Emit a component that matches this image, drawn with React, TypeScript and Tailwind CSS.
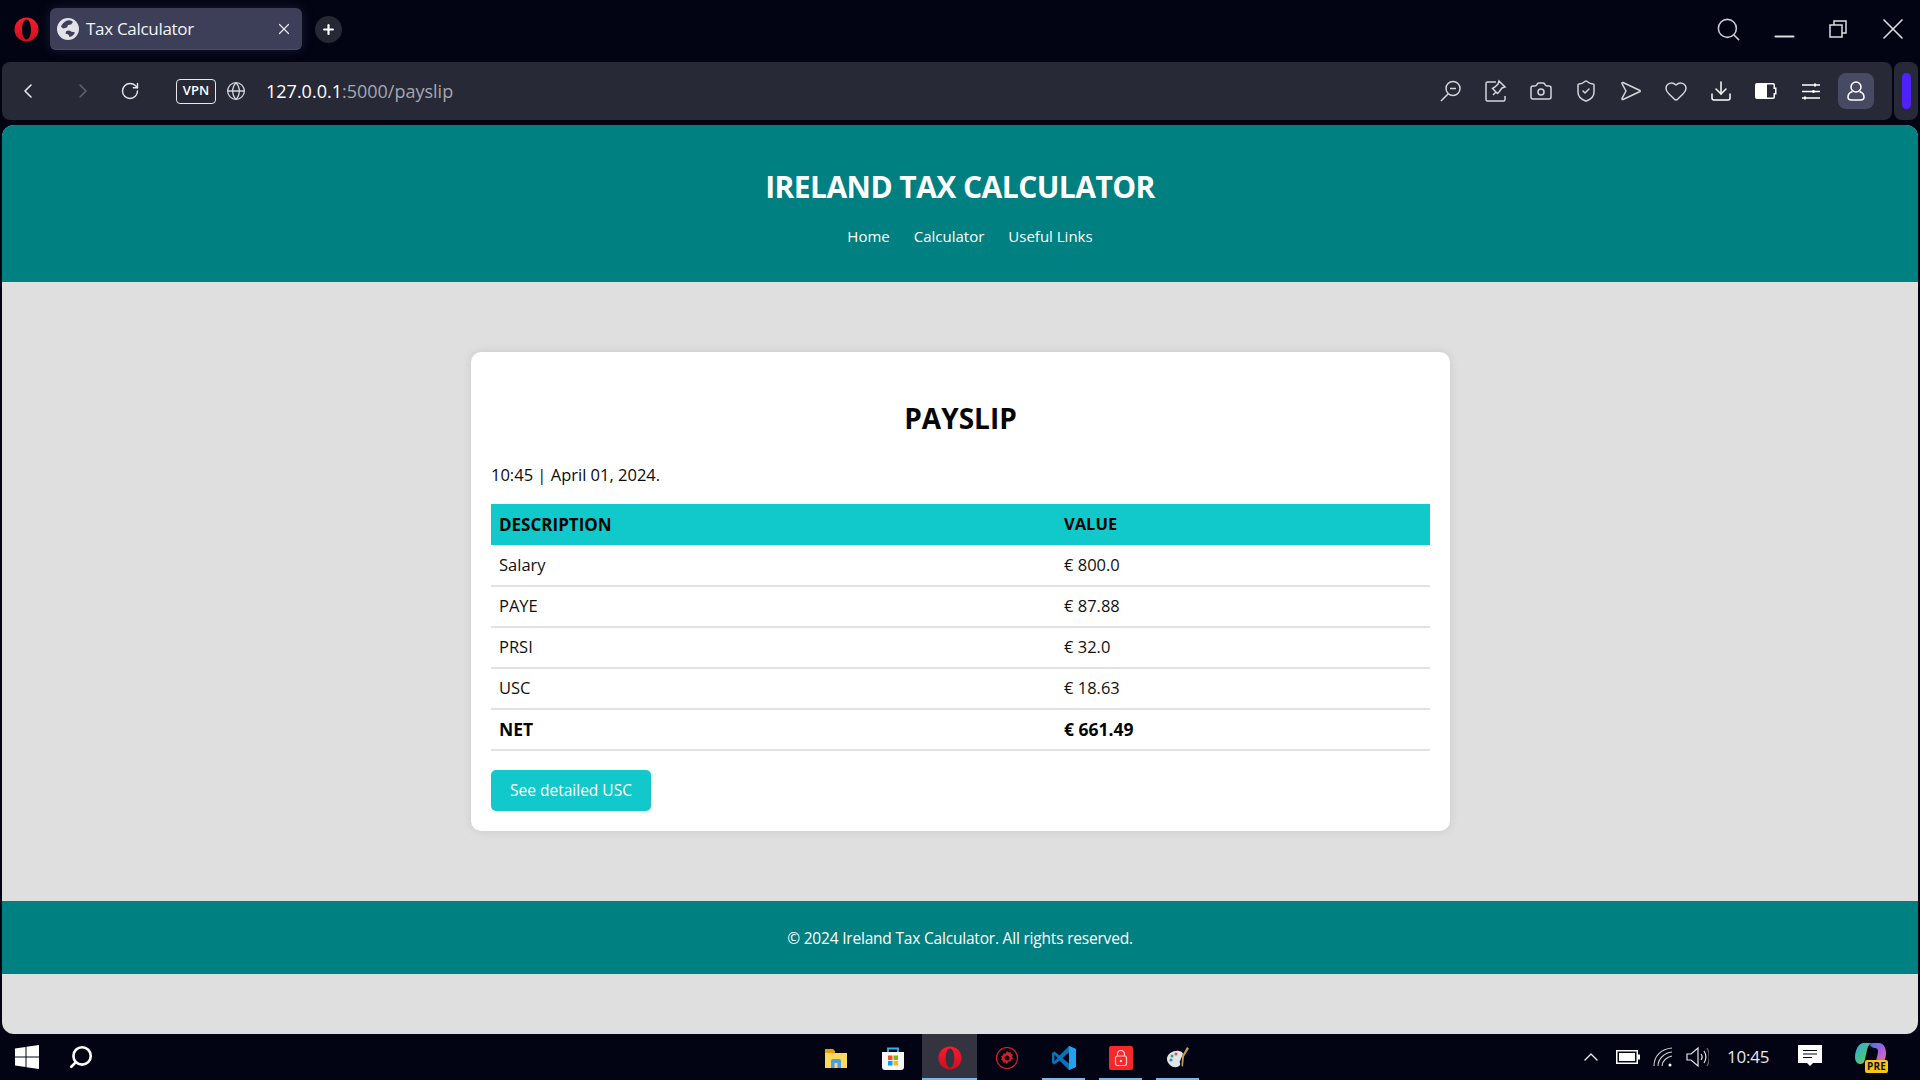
import { ReactNode } from "react"
import { ChevronLeft, ChevronRight, RotateCw, Globe, Search, Minus, X, Plus, Heart, Camera, ShieldCheck, Download, ChevronUp } from "lucide-react"

const rows = [
  { label: "Salary", value: "€ 800.0" },
  { label: "PAYE", value: "€ 87.88" },
  { label: "PRSI", value: "€ 32.0" },
  { label: "USC", value: "€ 18.63" },
]

function OperaLogo({ size, id }: { size: number; id: string }) {
  return (
    <svg width={size} height={size} viewBox="0 0 24 24">
      <defs>
        <linearGradient id={id} x1="0" y1="0" x2="0" y2="1">
          <stop offset="0" stopColor="#ff1b2d" />
          <stop offset="1" stopColor="#c9101f" />
        </linearGradient>
      </defs>
      <path
        fillRule="evenodd"
        fill={`url(#${id})`}
        d="M12 .5C5.6.5.5 5.6.5 12s5.100 11.500 11.500 11.500S23.500 18.400 23.500 12 18.400.5 12 .5Zm0 2c2.600 0 4.300 4.200 4.300 9.500s-1.700 9.500-4.300 9.500S7.700 17.300 7.700 12 9.400 2.500 12 2.500Z"
      />
    </svg>
  )
}

function TabGlobe() {
  return (
    <svg width="22" height="22" viewBox="0 0 22 22" className="shrink-0">
      <circle cx="11" cy="11" r="11" fill="#e2e3e6" />
      <path fill="#3c3f57" d="M9 3c2-1 5-1 7 1l-2 2.500-3 .5-1 2.500-4 1L4 8.500C5 6 7 4 9 3Z" />
      <path fill="#3c3f57" d="M9 13.500c2-1.500 4-1 5 0l4 1c-1 2.500-3 4-5.500 4.500l-1-2.500-3-1z" />
    </svg>
  )
}

function ToolIcon({ children }: { children: ReactNode }) {
  return <div className="w-[45px] h-[36px] flex items-center justify-center text-[#d3d5da] shrink-0">{children}</div>
}

function Toolbar() {
  return (
    <div className="flex items-center">
      <ToolIcon>
        <svg width="24" height="24" viewBox="0 0 24 24" fill="none" stroke="currentColor" strokeWidth="1.5">
          <circle cx="14" cy="9.500" r="7" />
          <path d="M11 9.500h6M9 15l-7 7" />
        </svg>
      </ToolIcon>
      <ToolIcon>
        <svg width="24" height="24" viewBox="0 0 24 24" fill="none" stroke="currentColor" strokeWidth="1.500">
          <path d="M12 3H3.500A1.500 1.500 0 0 0 2 4.500v16A1.500 1.500 0 0 0 3.500 22h16a1.500 1.500 0 0 0 1.500-1.500V17" />
          <path d="m15 2 6 6-3 1-3 4-1.500 1.500-5-5L11 8l3-3 1-3ZM9 16l3-3" />
        </svg>
      </ToolIcon>
      <ToolIcon><Camera size={24} strokeWidth={1.5} /></ToolIcon>
      <ToolIcon><ShieldCheck size={24} strokeWidth={1.5} /></ToolIcon>
      <ToolIcon>
        <svg width="24" height="24" viewBox="0 0 24 24" fill="none" stroke="currentColor" strokeWidth="1.500" strokeLinejoin="round">
          <path d="M4 3.500 21 11.500a.6.6 0 0 1 0 1L4 20.500c-.8.300-1.400-.4-1-1.100L7 12 3 4.600c-.4-.7.200-1.400 1-1.100Z" />
        </svg>
      </ToolIcon>
      <ToolIcon><Heart size={24} strokeWidth={1.5} /></ToolIcon>
      <ToolIcon><Download size={24} strokeWidth={1.5} className="text-white" /></ToolIcon>
      <ToolIcon>
        <svg width="24" height="24" viewBox="0 0 24 24">
          <path fill="#fff" d="M3 4h10v16H3a2 2 0 0 1-2-2V6a2 2 0 0 1 2-2Z" />
          <path fill="#fff" d="M13 4h6a2 2 0 0 1 2 2v2.500h1.500V15.500H21V18a2 2 0 0 1-2 2h-6v-1.500h6a.5.500 0 0 0 .5-.5v-4h1.500v-4h-1.500V6a.5.500 0 0 0-.5-.5h-6Z" />
        </svg>
      </ToolIcon>
      <ToolIcon>
        <svg width="24" height="24" viewBox="0 0 24 24" fill="none" stroke="#fff" strokeWidth="1.300">
          <path d="M3 6h18M3 12.500h18M3 19h18" />
          <path d="M16 4.500v3M14.500 11v3M6 17.500v3" strokeWidth="2" />
        </svg>
      </ToolIcon>
      <div className="w-[36px] h-[36px] mx-[5px] rounded-lg bg-[#474a63] flex items-center justify-center text-white">
        <svg width="24" height="24" viewBox="0 0 24 24" fill="none" stroke="currentColor" strokeWidth="1.500">
          <circle cx="12" cy="8" r="5" />
          <path d="M8.500 12.500C5.500 13.500 4 15.500 4 18c0 2 1.500 3 3.500 3h9c2 0 3.500-1 3.500-3 0-2.500-1.500-4.500-4.500-5.500" />
        </svg>
      </div>
    </div>
  )
}

function TaskIcon({ active, under, children }: { active?: boolean; under?: boolean; children: ReactNode }) {
  return (
    <div className={active ? "relative w-[55px] h-[47px] mx-px flex items-center justify-center bg-[#33343f]" : "relative w-[57px] h-[47px] flex items-center justify-center"}>
      {children}
      {active && <div className="absolute bottom-0 inset-x-0 h-[3px] bg-[#76b9ed]" />}
      {under && <div className="absolute bottom-0 left-[7px] right-[7px] h-[3px] bg-[#76b9ed]" />}
    </div>
  )
}

export default function App() {
  return (
    <div className="h-screen w-full overflow-hidden flex flex-col bg-[#020413] font-['Open_Sans','Noto_Sans',sans-serif]">
      {/* Browser tabs */}
      <div className="h-[62px] shrink-0 flex items-start">
        <div className="w-[50px] h-[58px] flex items-center justify-center pl-[2px]"><OperaLogo size={25} id="operaTab" /></div>
        <div className="mt-[8px] w-[252px] h-[42px] rounded-md bg-[#3c3f57] border-b border-[#4b4e68] shadow-[0_0_12px_rgba(70,75,110,0.35)] flex items-center pl-[7px] pr-[2px] text-white">
          <TabGlobe />
          <span className="ml-[7px] text-[17px] tracking-[-0.3px] flex-1 text-[#f4f4f6]">Tax Calculator</span>
          <X size={18} strokeWidth={1.6} className="mr-[7px] text-[#e9e9ec]" />
        </div>
        <div className="ml-[13px] mt-[16px] w-[27px] h-[27px] rounded-full bg-[#262934] flex items-center justify-center">
          <Plus size={15} strokeWidth={3.5} className="text-white" />
        </div>
        <div className="flex-1" />
        <div className="flex items-center h-[58px] text-[#dcdde0]">
          <Search size={27} strokeWidth={1.4} className="mr-[15px] text-[#c9cbd0]" />
          <div className="w-[54px] flex justify-center"><Minus size={31} strokeWidth={1.5} className="mt-[14px]" /></div>
          <div className="w-[54px] flex justify-center mr-px">
            <svg width="18" height="18" viewBox="0 0 18 18" fill="none" stroke="currentColor" strokeWidth="1.500">
              <path d="M1 5h12v12H1zM5 5V1h12v12h-4" />
            </svg>
          </div>
          <div className="w-[54px] flex justify-center"><X size={36} strokeWidth={1.1} /></div>
        </div>
      </div>

      {/* Address bar */}
      <div className="h-[58px] shrink-0 flex gap-[2px] px-[2px]">
        <div className="flex-1 rounded-lg bg-[#272a36] flex items-center pr-[13px]">
          <ChevronLeft size={24} strokeWidth={1.6} className="ml-[14px] text-[#e6e7ea]" />
          <ChevronRight size={24} strokeWidth={1.6} className="ml-[31px] text-[#5f626e]" />
          <RotateCw size={20} strokeWidth={1.7} className="ml-[25px] text-[#e6e7ea]" />
          <div className="ml-[36px] w-[40px] h-[25px] rounded border border-[#e6e7ea] text-white text-[13px] font-semibold flex items-center justify-center">VPN</div>
          <Globe size={20} strokeWidth={1.6} className="ml-[10px] text-[#d3d5da]" />
          <div className="ml-[20px] text-[18px]">
            <span className="text-white">127.0.0.1</span>
            <span className="text-[#a3a7b2]">:5000/payslip</span>
          </div>
          <div className="flex-1" />
          <Toolbar />
        </div>
        <div className="w-[24px] rounded-lg bg-[#272a36] flex items-center justify-center">
          <div className="w-[9px] h-[36px] rounded-full bg-[#5021ff]" />
        </div>
      </div>

      {/* Page */}
      <div className="h-[909px] shrink-0 mt-[5px] mx-[2px] rounded-xl bg-[#dfdfdf] overflow-hidden flex flex-col">
        <header className="h-[157px] shrink-0 bg-[#008080] text-white text-center pt-[40px]">
          <h1 className="text-[30px] leading-[44px] font-bold tracking-[-0.55px]">IRELAND TAX CALCULATOR</h1>
          <nav className="mt-[16px] pl-[20px] flex justify-center gap-[24px] text-[15px] leading-[22px]">
            <span>Home</span>
            <span>Calculator</span>
            <span>Useful Links</span>
          </nav>
        </header>

        <main className="flex-1 flex flex-col items-center pt-[70px]">
          <div className="ml-px w-[979px] h-[479px] bg-white rounded-[10px] shadow-[0_0_10px_rgba(0,0,0,0.1)] pt-[20px] px-[20px]">
            <h2 className="text-center text-[28px] leading-[40px] mt-[26px] font-bold text-[#050505]">PAYSLIP</h2>
            <p className="mt-[25px] text-[16.500px] leading-[24px] text-[#0c0c0c]">10:45 | April 01, 2024.</p>
            <table className="mt-[17px] w-full border-collapse text-[16.500px] text-[#111]">
              <thead>
                <tr className="bg-[#11c9cb] h-[41px] text-left text-[#050505]">
                  <th className="w-[565px] px-[8px] font-bold text-[17px]">DESCRIPTION</th>
                  <th className="px-[8px] font-bold">VALUE</th>
                </tr>
              </thead>
              <tbody>
                {rows.map((r) => (
                  <tr key={r.label} className="h-[41px] border-b-2 border-[#e2e2e2]">
                    <td className="px-[8px]">{r.label}</td>
                    <td className="px-[8px]">{r.value}</td>
                  </tr>
                ))}
                <tr className="h-[41px] border-b-2 border-[#e2e2e2] font-bold text-[#050505] text-[17.500px]">
                  <td className="px-[8px]">NET</td>
                  <td className="px-[8px]">€ 661.49</td>
                </tr>
              </tbody>
            </table>
            <button className="mt-[19px] w-[160px] h-[41px] rounded-[5px] bg-[#11c9cb] text-white text-[15.500px]">See detailed USC</button>
          </div>
        </main>

        <footer className="h-[73px] shrink-0 mb-[60px] bg-[#008080] text-white text-[15.500px] tracking-[-0.2px] flex items-center justify-center pt-[2px]">
          © 2024 Ireland Tax Calculator. All rights reserved.
        </footer>
      </div>

      {/* Windows taskbar */}
      <div className="flex-1 flex items-center text-white relative">
        <div className="w-[54px] flex justify-center">
          <svg width="24" height="24" viewBox="0 0 24 24" fill="#fff">
            <path d="M0 3.400 10.500 2v9.500H0zM11.500 1.800 24 0v11.500H11.500zM0 12.500h10.500V22L0 20.600zM11.500 12.500H24V24l-12.500-1.800z" />
          </svg>
        </div>
        <Search size={26} strokeWidth={2.4} className="ml-[14px] -scale-x-100" />
        <div className="flex-1" />
        <div className="absolute left-[807px] top-0 flex">
          <TaskIcon>
            <svg width="24" height="24" viewBox="0 0 24 24">
              <path fill="#e3a008" d="M1 3h8l2 2v4H1z" />
              <path fill="#fbd95f" d="M1 7h22v15H1z" />
              <path fill="#4a9fe0" d="M7 22v-7a2 2 0 0 1 2-2h6a2 2 0 0 1 2 2v7h-3.500v-5h-3v5z" />
            </svg>
          </TaskIcon>
          <TaskIcon>
            <svg width="24" height="24" viewBox="0 0 24 24">
              <path fill="none" stroke="#35b4f0" strokeWidth="1.800" d="M7 7V2.500h10V7" />
              <path fill="#f7f7f7" d="M1 6h22v15a3 3 0 0 1-3 3H4a3 3 0 0 1-3-3z" />
              <path fill="#f25022" d="M7 9.500h4.500V14H7z" />
              <path fill="#7fba00" d="M12.500 9.500H17V14h-4.500z" />
              <path fill="#00a4ef" d="M7 15h4.500v4.500H7z" />
              <path fill="#ffb900" d="M12.500 15H17v4.500h-4.500z" />
            </svg>
          </TaskIcon>
          <TaskIcon active><OperaLogo size={24} id="operaTask" /></TaskIcon>
          <TaskIcon>
            <svg width="24" height="24" viewBox="0 0 24 24" fill="none">
              <circle cx="12" cy="12" r="10.500" stroke="#e0202a" strokeWidth="1.100" />
              <path fill="#d81e28" d="m12 5 1.500 1.500 2-.5.500 2 2 1-1 1.800 1 1.700-2 1-.5 2-2-.3L12 18l-1.500-1.500-2 .3-.5-2-2-1 1-1.700-1-1.800 2-1 .5-2 2 .5z" />
              <circle cx="12" cy="12" r="2.500" fill="#17060a" />
            </svg>
          </TaskIcon>
          <TaskIcon under>
            <svg width="24" height="24" viewBox="0 0 24 24">
              <path fill="#0a72b8" d="M17 0 7.500 9.500 2.500 5.600 0 7v10l2.500 1.400 5-3.900L17 24l7-3V3l-7-3Zm0 6.500v11L10.500 12 17 6.500ZM2.500 8.800 5.500 12l-3 3.200V8.800Z" />
              <path fill="#22a2ee" d="M17 0l7 3v18l-7 3z" />
            </svg>
          </TaskIcon>
          <TaskIcon under>
            <svg width="24" height="24" viewBox="0 0 24 24">
              <rect width="24" height="24" rx="2" fill="#f5282a" />
              <rect x="6.500" y="10" width="11" height="9.500" rx="2" fill="none" stroke="#fbd0d0" strokeWidth="1.200" />
              <path d="M8.500 10V8a3.500 3.500 0 0 1 7 0v2" fill="none" stroke="#fbd0d0" strokeWidth="1.200" />
              <circle cx="12" cy="15" r="1.200" fill="#fbd0d0" />
            </svg>
          </TaskIcon>
          <TaskIcon under>
            <svg width="24" height="24" viewBox="0 0 24 24">
              <path fill="#dfe5ea" d="M1 12c1-5 7-8 12-7 3 .6 4 2 4 3l-3 7c-1 2 1 2 0 4-2 3-7 3-10 0-2-2-3.500-4.500-3-7Z" />
              <circle cx="6" cy="10" r="1.500" fill="#3aa655" />
              <circle cx="10" cy="8" r="1.500" fill="#e0503f" />
              <circle cx="5" cy="14" r="1.500" fill="#3b82d6" />
              <path d="M21 1l2 1.500-5 8-1 10-1.500-.5.5-10z" fill="#c69a5b" />
            </svg>
          </TaskIcon>
        </div>
        <div className="flex items-center">
          <ChevronUp size={24} strokeWidth={1.4} className="mr-[13px] text-[#e8e8ea]" />
          <svg width="24" height="14" viewBox="0 0 24 14" className="mr-[13px]">
            <rect x=".75" y=".75" width="20.500" height="12.500" fill="none" stroke="#fff" strokeWidth="1.500" />
            <rect x="3" y="3" width="16" height="8" fill="#fff" />
            <rect x="22" y="4.500" width="2" height="5" fill="#fff" />
          </svg>
          <svg width="20" height="20" viewBox="0 0 20 20" fill="none" stroke="#cfcfd2" strokeWidth="1.100" className="mr-[13px]">
            <path d="M1 19C1 9 8 2 19 1M5 19c0-7 6-13 14-14M9 19c0-5 5-9 10-10" />
            <circle cx="17" cy="18" r="1.500" fill="#fff" stroke="none" />
          </svg>
          <svg width="23" height="22" viewBox="0 0 23 22" fill="none" stroke="#e8e8ea" strokeWidth="1.200" className="mr-[18px]">
            <path d="M1 8v6h4l7 6V2L5 8zM15 8c1.500 2 1.500 4 0 6M18 5c2.500 3.500 2.500 8.500 0 12" />
            <path d="M21 2c3 5 3 13 0 18" stroke="#66666d" />
          </svg>
          <span className="text-[17px] tracking-[-0.2px] text-[#e8e8ea] w-[44px]">10:45</span>
          <svg width="24" height="24" viewBox="0 0 24 24" className="ml-[27px]">
            <path fill="#fff" d="M0 0h24v18h-9l-3 3-3-3H0z" />
            <path stroke="#020413" strokeWidth="1.200" d="M5 5.500h14M5 9h14M5 12.500h9" />
          </svg>
          <div className="relative ml-[33px] mr-[33px] w-[32px] h-[30px]">
            <svg width="32" height="26" viewBox="0 0 32 26" className="absolute top-0 left-0">
              <defs>
                <linearGradient id="cpA" x1="0" y1="0" x2="1" y2="1">
                  <stop offset="0" stopColor="#2fa6e8" />
                  <stop offset=".6" stopColor="#4cc47c" />
                  <stop offset="1" stopColor="#f3c42c" />
                </linearGradient>
                <linearGradient id="cpB" x1="0" y1="0" x2="1" y2="1">
                  <stop offset="0" stopColor="#3d7be8" />
                  <stop offset=".5" stopColor="#a65fe0" />
                  <stop offset="1" stopColor="#f0739a" />
                </linearGradient>
              </defs>
              <path fill="url(#cpA)" d="M9 1h8c-3 1-4 3-5 7l-2 9c-.5 3-2 5-5 5-3 0-5-3-5-7C0 9 3 1 9 1Z" />
              <path fill="url(#cpB)" d="M15 3c1-1.500 2-2 4-2h5c4 0 7 4 7 10 0 5-2 11-7 11h-7c3-1 4-3 5-7l1-5c.5-2-1-4-3-4-2 0-4-1-5-3Z" />
            </svg>
            <div className="absolute -bottom-[1px] right-[-1px] h-[13px] px-[2px] rounded-[2px] bg-[#f9c513] text-[#111] text-[10px] leading-[13px] font-bold tracking-[0.2px]">PRE</div>
          </div>
        </div>
      </div>
    </div>
  )
}
